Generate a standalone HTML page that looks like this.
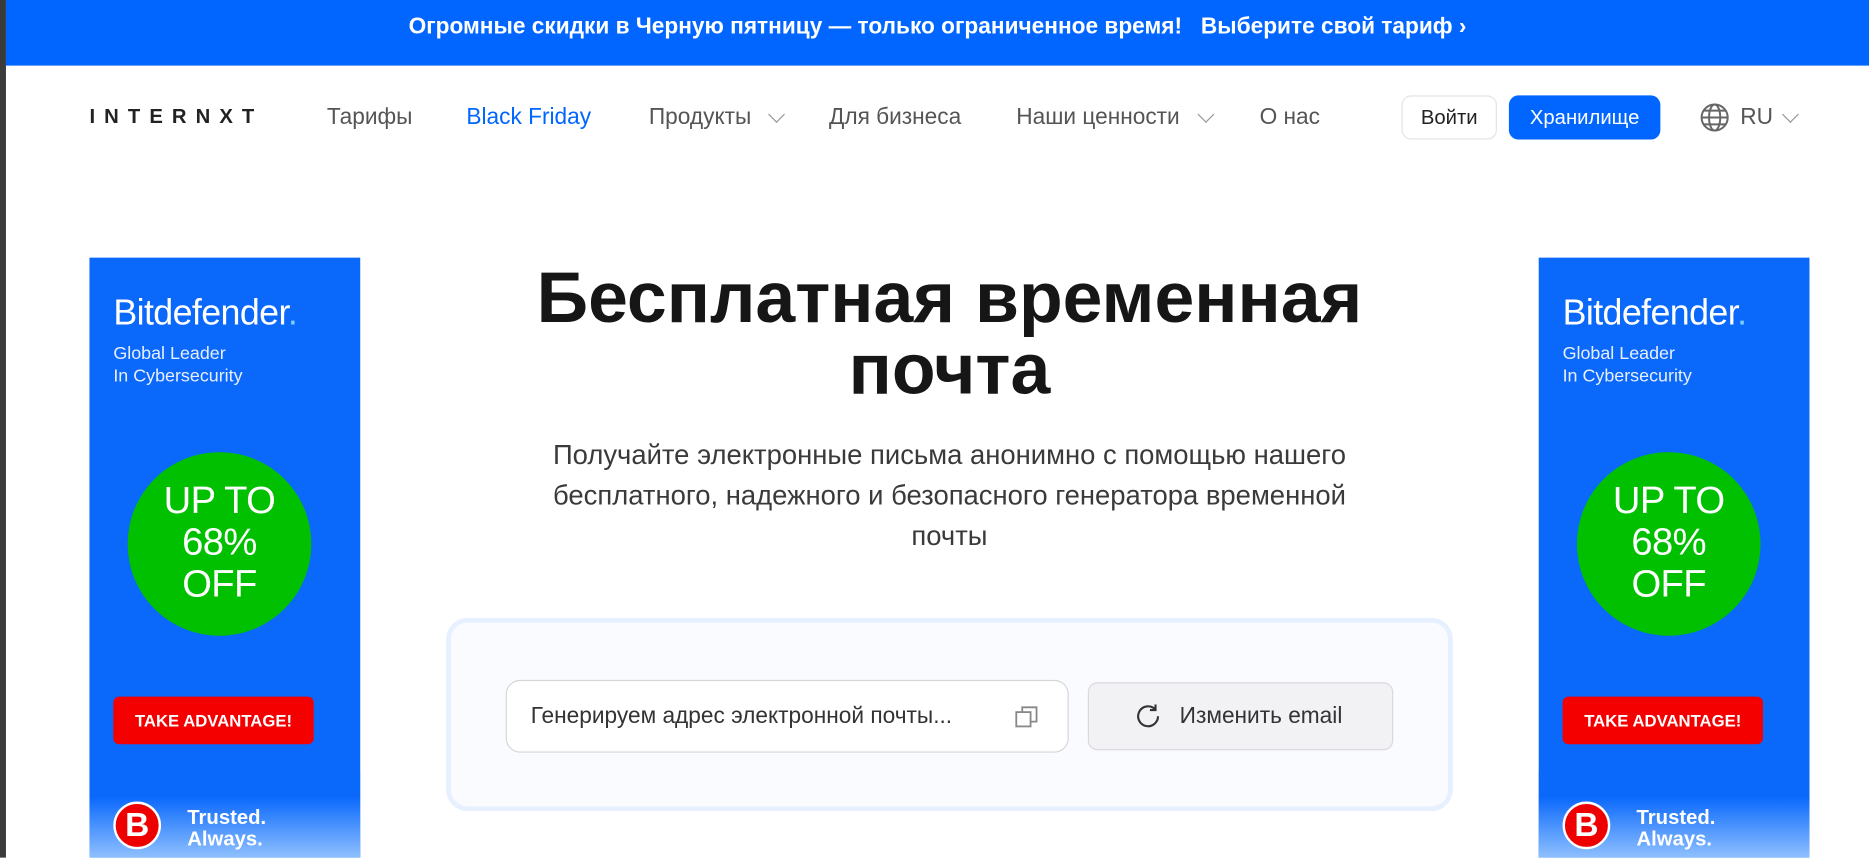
<!DOCTYPE html>
<html><head><meta charset="utf-8"><style>
*{margin:0;padding:0;box-sizing:border-box}
body{width:1869px;height:857px;overflow:hidden;background:#fff;font-family:"Liberation Sans",sans-serif;position:relative}
#w{position:absolute;left:0;top:0;width:1567px;height:719px;transform:scale(1.1928);transform-origin:0 0}
.a{position:absolute}
.strip{left:0;top:0;width:5px;height:719px;background:#3b3b3b}
.top{left:5px;top:0;width:1562px;height:55px;background:#0066ff;color:#fff;font-weight:bold;font-size:19px;text-align:center;line-height:46px}
.nav{font-size:19px;color:#555;top:87px;line-height:24px}
.chev{top:91px;width:10px;height:10px;border-right:1.5px solid #999;border-bottom:1.5px solid #999;transform:rotate(45deg)}
.ad{width:227px;height:503px;top:216px;background:#0a68fb;color:#fff;overflow:hidden}
.ad .bd{left:20px;top:30px;font-size:30px;letter-spacing:-0.5px}
.ad .gl{left:20px;top:71px;font-size:15px;line-height:19px;color:#e8efff}
.ad .circ{left:32px;top:163px;width:154px;height:154px;border-radius:50%;background:#00c000;text-align:center;font-size:32px;line-height:35px;padding-top:23px;letter-spacing:-0.5px}
.ad .btn{left:20px;top:368px;width:168px;height:40px;background:#f50000;border-radius:5px;font-weight:bold;font-size:14px;text-align:center;line-height:40px}
.ad .fade{left:0;top:430px;width:227px;height:73px;background:linear-gradient(#0a68fb 30%,#8fc0ff)}
.ad .b{left:20px;top:456px;width:40px;height:40px;border-radius:50%;background:#e00;border:2px solid #fff;font-weight:bold;font-size:28px;text-align:center;line-height:36px}
.ad .tr{left:82px;top:461px;font-size:17px;line-height:18px;font-weight:bold}
h1{position:absolute;left:380px;width:832px;top:220px;text-align:center;font-size:60px;line-height:60px;color:#161616;font-weight:bold}
.sub{left:431px;width:730px;top:364px;text-align:center;font-size:23px;line-height:34px;color:#3a3a3a}
.card{left:374px;top:518px;width:844px;height:162px;border:4px solid #e6f0ff;background:#f9fbfe;border-radius:18px}
.inp{left:424px;top:570px;width:472px;height:61px;background:#fff;border:1px solid #d6d6db;border-radius:12px;font-size:19px;color:#333;line-height:59px;padding-left:20px}
.chg{left:912px;top:572px;width:256px;height:57px;background:#f2f2f5;border:1px solid #d8d8de;border-radius:8px;font-size:19px;color:#333;line-height:55px;padding-left:76px}
</style></head><body><div id="w">
<div class="a strip"></div>
<div class="a top">Огромные скидки в Черную пятницу — только ограниченное время!&nbsp;&nbsp;&nbsp;Выберите свой тариф ›</div>

<div class="a" style="left:75px;top:88px;font-size:17px;font-weight:bold;letter-spacing:7.6px;color:#222">INTERNXT</div>
<div class="a nav" style="left:274px">Тарифы</div>
<div class="a nav" style="left:391px;color:#0066ff">Black Friday</div>
<div class="a nav" style="left:544px">Продукты</div>
<div class="a chev" style="left:646px"></div>
<div class="a nav" style="left:695px">Для бизнеса</div>
<div class="a nav" style="left:852px">Наши ценности</div>
<div class="a chev" style="left:1006px"></div>
<div class="a nav" style="left:1056px">О нас</div>
<div class="a" style="left:1175px;top:80px;width:80px;height:37px;border:1px solid #e4e4e4;border-radius:8px;font-size:17px;color:#222;text-align:center;line-height:35px">Войти</div>
<div class="a" style="left:1265px;top:80px;width:127px;height:37px;background:#0066ff;border-radius:8px;font-size:17px;color:#fff;text-align:center;line-height:37px">Хранилище</div>
<svg class="a" style="left:1425px;top:86px" width="25" height="25" viewBox="0 0 24 24" fill="none" stroke="#666" stroke-width="1.6"><circle cx="12" cy="12" r="10.5"/><ellipse cx="12" cy="12" rx="4.5" ry="10.5"/><path d="M1.5 12h21M3 6.5h18M3 17.5h18"/></svg>
<div class="a nav" style="left:1459px;color:#555">RU</div>
<div class="a chev" style="left:1496px"></div>

<div class="a ad" style="left:75px">
<div class="a bd">Bitdefender<span style="color:#7fd0ff">.</span></div>
<div class="a gl">Global Leader<br>In Cybersecurity</div>
<div class="a circ">UP TO<br>68%<br>OFF</div>
<div class="a btn">TAKE ADVANTAGE!</div>
<div class="a fade"></div>
<div class="a b">B</div>
<div class="a tr">Trusted.<br>Always.</div>
</div>
<div class="a ad" style="left:1290px">
<div class="a bd">Bitdefender<span style="color:#7fd0ff">.</span></div>
<div class="a gl">Global Leader<br>In Cybersecurity</div>
<div class="a circ">UP TO<br>68%<br>OFF</div>
<div class="a btn">TAKE ADVANTAGE!</div>
<div class="a fade"></div>
<div class="a b">B</div>
<div class="a tr">Trusted.<br>Always.</div>
</div>

<h1>Бесплатная временная<br>почта</h1>
<div class="a sub">Получайте электронные письма анонимно с помощью нашего бесплатного, надежного и безопасного генератора временной почты</div>

<div class="a card"></div>
<div class="a inp">Генерируем адрес электронной почты...</div>
<svg class="a" style="left:849px;top:589px" width="24" height="24" viewBox="0 0 24 24" fill="none" stroke="#888" stroke-width="1.5"><rect x="3" y="8" width="12" height="12"/><path d="M8 8V4h12v12h-5"/></svg>
<div class="a chg">Изменить email</div>
<svg class="a" style="left:950px;top:588px" width="25" height="25" viewBox="0 0 24 24" fill="none" stroke="#333" stroke-width="1.7"><path d="M20 12a8 8 0 1 1-2.5-5.8"/><path d="M18 2.5v4.5h-4.5"/></svg>
</div></body></html>
